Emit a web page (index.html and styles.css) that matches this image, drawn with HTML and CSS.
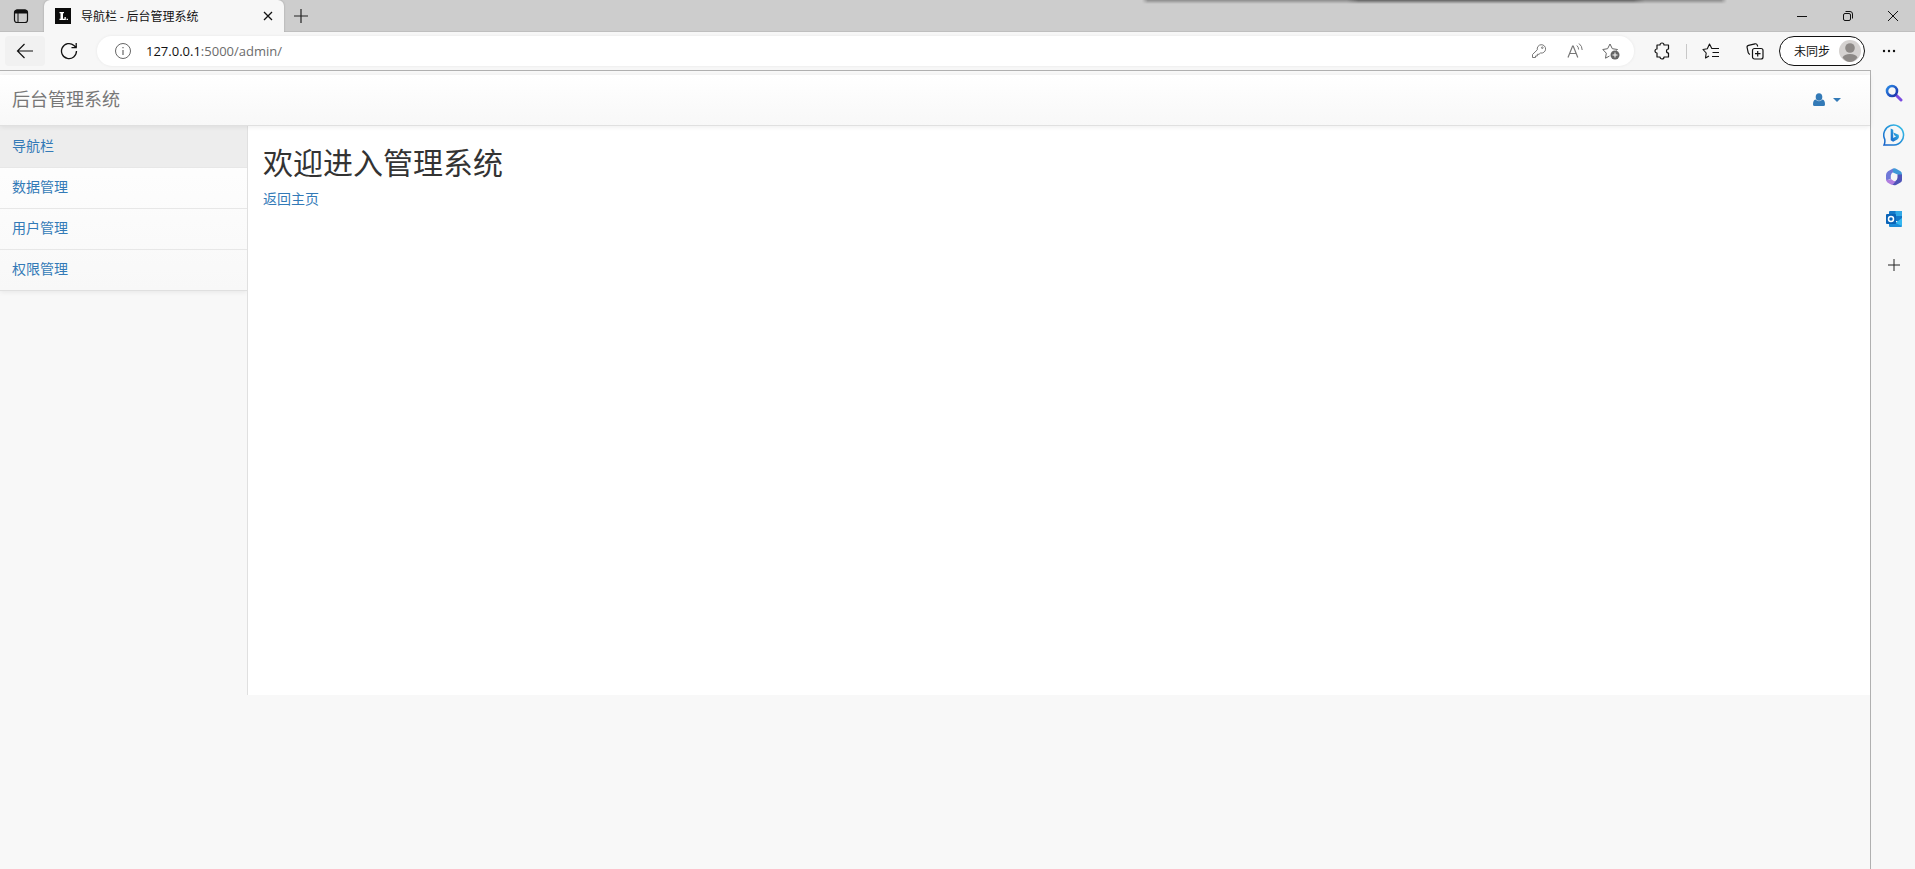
FILE: index.html
```html
<!DOCTYPE html>
<html lang="zh-CN">
<head>
<meta charset="utf-8">
<title>导航栏 - 后台管理系统</title>
<link rel="stylesheet" href="styles.css">
</head>
<body>
<div class="browser">
  <div class="window-shadow"></div>
  <header class="tabstrip">
    <button class="tab-actions" aria-label="标签操作"><svg width="16" height="16" viewBox="0 0 16 16"><rect x="1.500" y="2" width="13" height="12.500" rx="2.500" fill="none" stroke="#111" stroke-width="1.200"/><path d="M2 5V4q0-2 2-2h8q2 0 2 2v1z" fill="#111" stroke="#111"/><path d="M5 5v9" stroke="#111"/></svg></button>
    <div class="tab">
      <svg width="16" height="16" viewBox="0 0 16 16"><rect width="16" height="16" fill="#0b0b0b"/><path d="M4.500 4H9v1.200H8v5.500h1.500V9h1.300v3H4.500v-1.200h1V5.200h-1zM11.500 10.700H13V12h-1.500z" fill="#fff"/></svg>
      <span class="tab-title">导航栏 - 后台管理系统</span>
      <button class="tab-close" aria-label="关闭标签页"><svg width="10" height="10" viewBox="0 0 10 10"><path d="M1 1l8 8M9 1L1 9" stroke="#111" stroke-width="1.300"/></svg></button>
    </div>
    <button class="new-tab" aria-label="新建标签页"><svg width="16" height="16" viewBox="0 0 16 16"><path d="M8 1v14M1 8h14" stroke="#222" stroke-width="1.200"/></svg></button>
    <div class="window-controls">
      <button aria-label="最小化"><svg width="12" height="12" viewBox="0 0 12 12"><path d="M1 6.500h10" stroke="#111"/></svg></button>
      <button aria-label="还原"><svg width="12" height="12" viewBox="0 0 12 12" fill="none" stroke="#111"><rect x="1.500" y="3.500" width="7" height="7" rx="1.500"/><path d="M3.500 1.500H8q2.500 0 2.500 2.500v4.500"/></svg></button>
      <button aria-label="关闭"><svg width="12" height="12" viewBox="0 0 12 12"><path d="M1 1l10 10M11 1L1 11" stroke="#111"/></svg></button>
    </div>
  </header>

  <div class="toolbar">
    <button class="nav-button back" aria-label="返回"><svg width="18" height="18" viewBox="0 0 18 18" fill="none" stroke="#111" stroke-width="1.200"><path d="M17 9H1.500M8.500 2l-7 7 7 7"/></svg></button>
    <button class="nav-button" aria-label="刷新"><svg width="18" height="18" viewBox="0 0 18 18" fill="none" stroke="#111" stroke-width="1.300"><path d="M16.500 9A7.500 7.500 0 1 1 14 3.500L16 5.500M16.200 1v4.700h-4.700"/></svg></button>
    <div class="address">
      <svg class="info" width="18" height="18" viewBox="0 0 18 18" fill="none" stroke="#666"><circle cx="9" cy="9" r="7.500"/><path d="M9 8v5M9 5v1.300" stroke-width="1.200"/></svg>
      <div class="url"><span class="host">127.0.0.1</span>:5000/admin/</div>
      <button class="icon-button" aria-label="密码"><svg width="16" height="16" viewBox="0 0 16 16" fill="none" stroke="#777" stroke-linejoin="round"><path d="M6.300 6.800A4.200 4.200 0 1 1 9.500 10L8 11.300H6.300V13H4.500v1.500h-3v-3z"/><circle cx="11.300" cy="4.700" r=".8"/></svg></button>
      <button class="icon-button" aria-label="朗读"><svg width="18" height="18" viewBox="0 0 18 18" fill="none" stroke="#777"><path stroke-width="1.200" d="M2 15.500L6.600 4h.6l4.600 11.500M3.700 11.500H10"/><path d="M10.800 3.500q1.800 1.500 1.800 4M13 1.500q3.200 2.500 3.200 6.500"/></svg></button>
      <button class="icon-button" aria-label="收藏此页"><svg width="18" height="18" viewBox="0 0 18 18" fill="none" stroke="#666" stroke-linejoin="round"><path d="M7.500 14l-4 2.200.8-5L.8 7.500l4.800-.8L8 2l2.300 4.700 5.200.8-1 1"/><circle cx="13" cy="13" r="4.500" fill="#666" stroke="none"/><path d="M13 10.500v5M10.500 13h5" stroke="#fff"/></svg></button>
    </div>
    <button class="icon-button" aria-label="扩展"><svg width="18" height="18" viewBox="0 0 18 18" fill="none" stroke="#111" stroke-width="1.200" stroke-linejoin="round"><path d="M4 3h3a2 2 0 0 1 4 0h4.500v4a2 2 0 0 0 0 4v4H11a2 2 0 0 1-4 0H4v-4a2 2 0 0 1 0-4z"/></svg></button>
    <span class="divider"></span>
    <button class="icon-button" aria-label="收藏夹"><svg width="18" height="18" viewBox="0 0 18 18" fill="none" stroke="#111" stroke-width="1.100" stroke-linejoin="round"><path d="M7 14L3.500 16l.7-5L1 7.500l4.300-.7L7.500 2l2.300 4.500H17M10.500 10.500H17M10 14.500h7"/></svg></button>
    <button class="icon-button collections" aria-label="集锦"><svg width="18" height="18" viewBox="0 0 18 18" fill="none" stroke="#111" stroke-width="1.200"><rect x="6.500" y="6.500" width="10.500" height="10.500" rx="2"/><path d="M11.700 9v5.500M9 11.700h5.500M4 12.500Q2.500 12 2.200 10.700L1.100 5.500Q.7 3.700 2.500 3.300L9 1.800q1.800-.3 2.300 1.300l.4 1.400"/></svg></button>
    <button class="profile"><span>未同步</span><svg width="22" height="22" viewBox="0 0 22 22"><circle cx="11" cy="11" r="11" fill="#d5d2d0"/><circle cx="11" cy="8" r="4.800" fill="#8d8986"/><path d="M3.500 17.500Q5 14 11 14t7.500 3.500Q15 22 11 22t-7.500-4.500z" fill="#8d8986"/></svg></button>
    <button class="icon-button more" aria-label="更多"><svg width="14" height="4" viewBox="0 0 14 4" fill="#111"><circle cx="2" cy="2" r="1.200"/><circle cx="7" cy="2" r="1.200"/><circle cx="12" cy="2" r="1.200"/></svg></button>
  </div>

  <div class="workspace">
    <div class="page">
      <nav class="navbar">
        <a class="brand" href="#">后台管理系统</a>
        <a class="user-menu" href="#" aria-label="用户菜单"><svg width="12" height="14" viewBox="0 0 12 14" fill="#337ab7"><ellipse cx="6" cy="4" rx="3.300" ry="3.800"/><path d="M2.500 6.500Q6 9.800 9.500 6.500 12 7 12 11.500q0 1.500-1.500 1.500h-9Q0 13 0 11.500 0 7 2.500 6.500z"/></svg><span class="caret"></span></a>
      </nav>
      <div class="columns">
        <aside class="side">
          <ul class="menu">
            <li><a class="active" href="#">导航栏</a></li>
            <li><a href="#">数据管理</a></li>
            <li><a href="#">用户管理</a></li>
            <li><a href="#">权限管理</a></li>
          </ul>
        </aside>
        <main class="content">
          <h1>欢迎进入管理系统</h1>
          <a href="#">返回主页</a>
        </main>
      </div>
    </div>
    <aside class="edge-bar">
      <button aria-label="搜索"><svg width="18" height="18" viewBox="0 0 18 18" fill="none"><defs><linearGradient id="lens" x2="1" y2="1"><stop stop-color="#2b8be6"/><stop offset="1" stop-color="#1a2fa8"/></linearGradient></defs><path d="M11 11l5 5" stroke="#7b4be0" stroke-width="3" stroke-linecap="round"/><circle cx="7" cy="7" r="5" stroke="url(#lens)" stroke-width="2.600"/></svg></button>
      <button aria-label="必应"><svg width="22" height="22" viewBox="0 0 20 20" fill="none"><defs><linearGradient id="bing" x1="1" x2="0" y2="1"><stop stop-color="#35c2e8"/><stop offset="1" stop-color="#1762c9"/></linearGradient></defs><path d="M1 19q1-2 .6-5A9 9 0 1 1 10 19z" stroke="url(#bing)" stroke-width="1.400"/><path d="M7 4l2.300 1.200v7.500L12 11.200l-1.600-.8-1-2.600 4.800 2q1 2.800-1.200 4.200L9.200 16.200 7 14.700z" fill="url(#bing)"/></svg></button>
      <button aria-label="Microsoft 365"><svg width="18" height="18" viewBox="0 0 18 18"><path d="M8 .5L3 3.300Q1 4.700 1 7v5.500L5.800 11V7.500Q6 5 9 3.500z" fill="#6f78d8"/><path d="M8 .5q2-.5 4 .7l3.500 2.100Q17 4.300 17 6.500V9l-4.500-2.500L8 4.500z" fill="#4099d8"/><path d="M17 6.500V12q0 1.500-1.500 2.500L11 17q-2 .8-4-.4l-1-.8 4.500-2.800q2-1.500 2-3.500v-3z" fill="#4f54b8"/><path d="M1 11q2 2 4.800 0l3 2h2L7.500 17Q5 16 2.500 14.500 1 13.500 1 11z" fill="#b07ee0"/></svg></button>
      <button aria-label="Outlook"><svg width="18" height="18" viewBox="0 0 18 18"><rect x="4" y="1" width="13" height="10" rx="1" fill="#1478c8"/><path d="M10.500 1H16q1 0 1 1v4h-6.500z" fill="#32a9e7"/><path d="M4 9l6.500 4L17 8v8q0 1-1 1H5q-1 0-1-1z" fill="#1a8bd8"/><path d="M10.500 13L17 8v8z" fill="#35b8f1"/><rect x="1" y="4" width="10" height="10" rx="1" fill="#0a64b8"/><circle cx="6" cy="9" r="2.500" fill="none" stroke="#fff" stroke-width="1.500"/></svg></button>
      <button class="add" aria-label="添加"><svg width="12" height="12" viewBox="0 0 12 12"><path d="M6 0v12M0 6h12" stroke="#222"/></svg></button>
    </aside>
  </div>
</div>
</body>
</html>
```
FILE: styles.css
```css
* { box-sizing: border-box; }

body {
  margin: 0;
  background: #f7f7f7;
  color: #333;
  font: 400 14px/20px "Noto Sans CJK SC", sans-serif;
}

button {
  display: flex;
  align-items: center;
  justify-content: center;
  padding: 0;
  border: 0;
  background: none;
  color: #111;
  font: inherit;
}

a { color: #337ab7; text-decoration: none; }
svg { display: block; flex: none; }

.browser {
  position: relative;
  display: flex;
  flex-direction: column;
  min-height: 100vh;
}

/* Shade cast over the top edge by another window */
.window-shadow {
  position: absolute;
  top: 0;
  right: 188px;
  width: 585px;
  height: 4px;
  background: linear-gradient(90deg, transparent, #8c8c8c 1% 35%, #606060 37% 84%, #8c8c8c 86% 99%, transparent);
  mask-image: linear-gradient(#000, transparent);
}

.tabstrip {
  display: flex;
  height: 32px;
  background: #cdcdcd;
  border-bottom: 1px solid #bfbfbf;
}

.tab-actions { width: 42px; }

.tab {
  display: flex;
  align-items: center;
  width: 240px;
  height: 32px;
  margin-left: 2px;
  padding: 0 10px 0 11px;
  gap: 10px;
  border-radius: 6px 6px 0 0;
  background: #f7f7f7;
  box-shadow: 0 0 2px #999;
  clip-path: inset(0 -2px 0 -2px);
}

.tab-title {
  flex: 1;
  color: #111;
  font-size: 12px;
  line-height: 16px;
  white-space: nowrap;
}

.tab-close { width: 12px; height: 24px; }
.new-tab { width: 34px; }

.window-controls { display: flex; margin-left: auto; }
.window-controls button { width: 46px; }
.window-controls button:last-child { width: 44px; }

.toolbar {
  display: flex;
  align-items: center;
  height: 38px;
  padding: 0 8px 0 5px;
  background: #f7f7f7;
}

.nav-button { width: 40px; height: 30px; border-radius: 4px; }
.nav-button.back { margin-right: 4px; background: #f1f1f1; }

.address {
  display: flex;
  flex: 1;
  align-items: center;
  height: 30px;
  margin: 0 10px 0 8px;
  padding: 0 5px 0 17px;
  border-radius: 15px;
  background: #fff;
  box-shadow: 0 0 2px 1px #efefef;
}

.url {
  flex: 1;
  margin-left: 14px;
  color: #6b6b6b;
  font-family: "Open Sans", sans-serif;
  font-size: 13px;
}

.host { color: #111; }
.icon-button { width: 36px; height: 30px; }
.divider { width: 1px; height: 15px; margin: 0 6px; background: #c8c8c8; }
.collections { margin: 0 6px 0 8px; }

.profile {
  justify-content: space-between;
  width: 86px;
  height: 30px;
  padding: 0 3px 0 14px;
  border: 1px solid #111;
  border-radius: 15px;
  background: #fff;
  font-size: 12px;
}

.more { margin-left: 6px; }

.workspace { display: flex; flex: 1; }

.page {
  flex: 1;
  padding-top: 4px;
  border-top: 1px solid #b0b0b0;
  border-right: 1px solid #b0b0b0;
  background: #f8f8f8;
}

.navbar {
  position: relative;
  display: flex;
  align-items: center;
  justify-content: space-between;
  height: 51px;
  padding: 0 29px 0 12px;
  border-bottom: 1px solid #e0e0e0;
  background: linear-gradient(#fff, #f8f8f8);
  box-shadow: 0 1px 5px rgba(0, 0, 0, .075);
}

.brand { padding-bottom: 4px; color: #777; font-size: 18px; }
.user-menu { display: flex; align-items: center; gap: 8px; }

.caret {
  border-top: 4px solid #337ab7;
  border-right: 4px solid transparent;
  border-left: 4px solid transparent;
}

.columns { display: flex; min-height: 569px; }
.side { width: 247px; }

.menu {
  margin: 0;
  padding: 0;
  border-bottom: 1px solid #e0e0e0;
  background: linear-gradient(#fff, #f8f8f8);
  box-shadow: 0 1px 5px rgba(0, 0, 0, .075);
  list-style: none;
}

.menu li { border-top: 1px solid #e7e7e7; }
.menu li:first-child { border-top-color: #ededed; }
.menu a { display: block; padding: 8px 12px 12px; }
.menu .active { background: #ededed; }

.content {
  flex: 1;
  padding: 19px 15px;
  border-left: 1px solid #e0e0e0;
  background: #fff;
}

h1 {
  margin: 0 0 10px;
  font-size: 30px;
  font-weight: 400;
  line-height: 33px;
}

.edge-bar {
  display: flex;
  flex-direction: column;
  width: 44px;
  padding: 2px 0 0 1px;
  background: #f7f7f7;
}

.edge-bar button { height: 42px; }
.edge-bar .add { margin-top: 4px; }
```
